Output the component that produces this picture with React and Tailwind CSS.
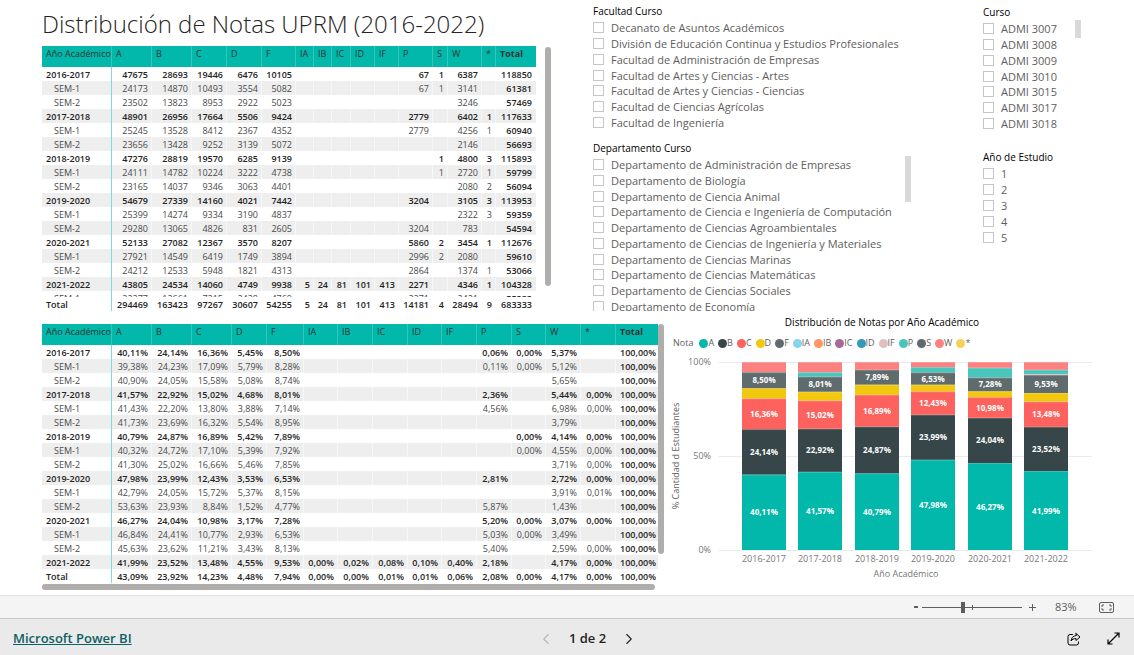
import { useState } from 'react';
import { ChevronLeft, ChevronRight } from 'lucide-react';

const GRADES = ['A', 'B', 'C', 'D', 'F', 'IA', 'IB', 'IC', 'ID', 'IF', 'P', 'S', 'W', '*'];

const COLORS = {
  A: '#01B8AA', B: '#374649', C: '#FD625E', D: '#F2C80F', F: '#5F6B6D',
  IA: '#8AD4EB', IB: '#FE9666', IC: '#A66999', ID: '#3599B8', IF: '#DFBFBF',
  P: '#4AC5BB', S: '#5F6B6D', W: '#FB8281', '*': '#F4D25A',
};

// label | A | B | C | D | F | IA | IB | IC | ID | IF | P | S | W | * | Total
const parse = (text) => text.trim().split('\n').map((line) => line.trim().split('|'));

const COUNT_ROWS = parse(`
2016-2017|47675|28693|19446|6476|10105||||||67|1|6387||118850
SEM-1|24173|14870|10493|3554|5082||||||67|1|3141||61381
SEM-2|23502|13823|8953|2922|5023||||||||3246||57469
2017-2018|48901|26956|17664|5506|9424||||||2779||6402|1|117633
SEM-1|25245|13528|8412|2367|4352||||||2779||4256|1|60940
SEM-2|23656|13428|9252|3139|5072||||||||2146||56693
2018-2019|47276|28819|19570|6285|9139|||||||1|4800|3|115893
SEM-1|24111|14782|10224|3222|4738|||||||1|2720|1|59799
SEM-2|23165|14037|9346|3063|4401||||||||2080|2|56094
2019-2020|54679|27339|14160|4021|7442||||||3204||3105|3|113953
SEM-1|25399|14274|9334|3190|4837||||||||2322|3|59359
SEM-2|29280|13065|4826|831|2605||||||3204||783||54594
2020-2021|52133|27082|12367|3570|8207||||||5860|2|3454|1|112676
SEM-1|27921|14549|6419|1749|3894||||||2996|2|2080||59610
SEM-2|24212|12533|5948|1821|4313||||||2864||1374|1|53066
2021-2022|43805|24534|14060|4749|9938|5|24|81|101|413|2271||4346|1|104328
SEM-1|22277|12661|7215|2428|4769||||||2271||2421||55233
`);

const COUNT_TOTAL = 'Total|294469|163423|97267|30607|54255|5|24|81|101|413|14181|4|28494|9|683333'.split('|');

const PERCENT_ROWS = parse(`
2016-2017|40,11%|24,14%|16,36%|5,45%|8,50%||||||0,06%|0,00%|5,37%||100,00%
SEM-1|39,38%|24,23%|17,09%|5,79%|8,28%||||||0,11%|0,00%|5,12%||100,00%
SEM-2|40,90%|24,05%|15,58%|5,08%|8,74%||||||||5,65%||100,00%
2017-2018|41,57%|22,92%|15,02%|4,68%|8,01%||||||2,36%||5,44%|0,00%|100,00%
SEM-1|41,43%|22,20%|13,80%|3,88%|7,14%||||||4,56%||6,98%|0,00%|100,00%
SEM-2|41,73%|23,69%|16,32%|5,54%|8,95%||||||||3,79%||100,00%
2018-2019|40,79%|24,87%|16,89%|5,42%|7,89%|||||||0,00%|4,14%|0,00%|100,00%
SEM-1|40,32%|24,72%|17,10%|5,39%|7,92%|||||||0,00%|4,55%|0,00%|100,00%
SEM-2|41,30%|25,02%|16,66%|5,46%|7,85%||||||||3,71%|0,00%|100,00%
2019-2020|47,98%|23,99%|12,43%|3,53%|6,53%||||||2,81%||2,72%|0,00%|100,00%
SEM-1|42,79%|24,05%|15,72%|5,37%|8,15%||||||||3,91%|0,01%|100,00%
SEM-2|53,63%|23,93%|8,84%|1,52%|4,77%||||||5,87%||1,43%||100,00%
2020-2021|46,27%|24,04%|10,98%|3,17%|7,28%||||||5,20%|0,00%|3,07%|0,00%|100,00%
SEM-1|46,84%|24,41%|10,77%|2,93%|6,53%||||||5,03%|0,00%|3,49%||100,00%
SEM-2|45,63%|23,62%|11,21%|3,43%|8,13%||||||5,40%||2,59%|0,00%|100,00%
2021-2022|41,99%|23,52%|13,48%|4,55%|9,53%|0,00%|0,02%|0,08%|0,10%|0,40%|2,18%||4,17%|0,00%|100,00%
`);

const PERCENT_TOTAL = 'Total|43,09%|23,92%|14,23%|4,48%|7,94%|0,00%|0,00%|0,01%|0,01%|0,06%|2,08%|0,00%|4,17%|0,00%|100,00%'.split('|');

const COUNT_WIDTHS = [70, 40, 40, 35, 35, 34, 18, 18, 19, 24, 24, 34, 15, 34, 14, 40];
const PERCENT_WIDTHS = [70, 40, 40, 40, 35, 37, 34, 35, 35, 34, 35, 35, 34, 35, 35, 42];

const FACULTIES = [
  'Decanato de Asuntos Académicos',
  'División de Educación Continua y Estudios Profesionales',
  'Facultad de Administración de Empresas',
  'Facultad de Artes y Ciencias - Artes',
  'Facultad de Artes y Ciencias - Ciencias',
  'Facultad de Ciencias Agrícolas',
  'Facultad de Ingeniería',
];

const DEPARTMENTS = [
  'Departamento de Administración de Empresas',
  'Departamento de Biología',
  'Departamento de Ciencia Animal',
  'Departamento de Ciencia e Ingeniería de Computación',
  'Departamento de Ciencias Agroambientales',
  'Departamento de Ciencias de Ingeniería y Materiales',
  'Departamento de Ciencias Marinas',
  'Departamento de Ciencias Matemáticas',
  'Departamento de Ciencias Sociales',
  'Departamento de Economía',
];

const COURSES = ['ADMI 3007', 'ADMI 3008', 'ADMI 3009', 'ADMI 3010', 'ADMI 3015', 'ADMI 3017', 'ADMI 3018'];
const STUDY_YEARS = ['1', '2', '3', '4', '5'];

function Matrix({ label, widths, rows, total, lastPad, clipLast }) {
  const tableWidth = widths.reduce((sum, w) => sum + w, 0);

  return (
    <table
      aria-label={label}
      className="table-fixed border-separate border-spacing-0 text-[9px] leading-4 text-[#333333]"
      style={{ width: tableWidth }}
    >
      <colgroup>
        {widths.map((w, i) => (
          <col key={i} style={{ width: w }} />
        ))}
      </colgroup>
      <thead>
        <tr className="bg-[#01b8aa]">
          {['Año Académico', ...GRADES, 'Total'].map((name, i) => (
            <th
              key={name}
              scope="col"
              className={`h-[21px] whitespace-nowrap border-r border-[#34c6bb] p-0 pl-1 text-left align-top last:border-r-0 ${
                i === 15 ? 'font-bold' : 'font-normal'
              }`}
            >
              {name}
            </th>
          ))}
        </tr>
      </thead>
      <tbody>
        {rows.map((row, r) => {
          const isYear = !row[0].startsWith('SEM');
          const clipped = clipLast && r === rows.length - 1;
          return (
            <tr key={r} className="even:bg-[#eeeeee]">
              {row.map((value, i) => {
                const weight = isYear || i === 15 ? 'font-semibold text-[#252423]' : 'font-normal text-[#4a4a4a]';
                const height = clipped ? 'h-1.5 overflow-hidden' : 'h-3.5';
                if (i === 0) {
                  return (
                    <th
                      key={i}
                      scope="row"
                      className={`border-r border-[#80dbd4] p-0 text-left ${isYear ? 'pl-1' : 'pl-3'} ${weight}`}
                    >
                      <div className={height}>{value}</div>
                    </th>
                  );
                }
                return (
                  <td
                    key={i}
                    className={`border-r border-white/50 p-0 text-right last:border-r-0 ${i === 15 ? lastPad : 'pr-[3px]'} ${weight}`}
                  >
                    <div className={height}>{value}</div>
                  </td>
                );
              })}
            </tr>
          );
        })}
      </tbody>
      <tfoot>
        <tr className="font-semibold text-[#252423]">
          {total.map((value, i) =>
            i === 0 ? (
              <th key={i} scope="row" className="border-r border-[#80dbd4] p-0 pl-1 text-left font-semibold">
                <div className="h-3.5">{value}</div>
              </th>
            ) : (
              <td key={i} className={`p-0 text-right ${i === 15 ? lastPad : 'pr-1'}`}>
                <div className="h-3.5">{value}</div>
              </td>
            )
          )}
        </tr>
      </tfoot>
    </table>
  );
}

function Slicer({ title, items, listHeight }) {
  return (
    <fieldset className="min-w-0">
      <legend className="text-[10px] leading-[14px] text-black">{title}</legend>
      <div className={`mt-0.5 flex flex-col ${listHeight}`}>
        {items.map((item) => (
          <label key={item} className="flex flex-1 items-center gap-[7px] whitespace-nowrap text-[11px] leading-[15px] text-[#605e5c]">
            <input
              type="checkbox"
              className="size-[11px] shrink-0 appearance-none border border-[#c8c6c4] bg-white checked:bg-[#605e5c]"
            />
            {item}
          </label>
        ))}
      </div>
    </fieldset>
  );
}

function Legend() {
  return (
    <div className="flex items-center gap-1 text-[9px] leading-3 text-[#605e5c]">
      <span className="mr-0.5">Nota</span>
      {GRADES.map((g) => (
        <span key={g} className="flex items-center">
          <span className="size-[9px] rounded-full" style={{ backgroundColor: COLORS[g] }} />
          {g}
        </span>
      ))}
    </div>
  );
}

const PLOT_TOP = 7;
const PLOT_HEIGHT = 188;
const BAR_WIDTH = 44;

function StackedChart() {
  const years = PERCENT_ROWS.filter((row) => !row[0].startsWith('SEM'));

  return (
    <svg
      viewBox="0 0 436 230"
      className="block w-full max-w-[436px] text-[9px]"
      role="img"
      aria-label="Distribución de Notas por Año Académico"
    >
      {[100, 50, 0].map((tick) => {
        const y = PLOT_TOP + PLOT_HEIGHT * (1 - tick / 100);
        return (
          <g key={tick}>
            <line x1="55" x2="428" y1={y + 0.5} y2={y + 0.5} stroke="#eaeaea" />
            <text x="47" y={y + 3} textAnchor="end" fill="#777777">{tick}%</text>
          </g>
        );
      })}
      {years.map((row, n) => {
        const x = 78 + Math.round(n * 56.4);
        const values = GRADES.map((_, i) => parseFloat((row[i + 1] || '0').replace(',', '.')));
        const sum = values.reduce((a, b) => a + b, 0);
        let base = 0;
        return (
          <g key={row[0]}>
            {GRADES.map((g, i) => {
              const height = (values[i] / sum) * PLOT_HEIGHT;
              const y = PLOT_TOP + PLOT_HEIGHT - base - height;
              base += height;
              if (height < 0.1) return null;
              return (
                <g key={g}>
                  <rect x={x} y={y} width={BAR_WIDTH} height={height} fill={COLORS[g]} />
                  {height > 1 && (
                    <path d={`M${x} ${y + 0.5}h${BAR_WIDTH}`} stroke="#ffffff" strokeOpacity="0.2" />
                  )}
                  {height > 11 && (
                    <text x={x + BAR_WIDTH / 2} y={y + height / 2 + 3} textAnchor="middle" fill="#ffffff" className="text-[8px] font-bold">
                      {row[i + 1]}
                    </text>
                  )}
                </g>
              );
            })}
            <text x={x + BAR_WIDTH / 2} y="207" textAnchor="middle" fill="#777777">{row[0]}</text>
          </g>
        );
      })}
      <text x="242" y="222" textAnchor="middle" fill="#777777">Año Académico</text>
      <text transform="translate(15 101) rotate(-90)" textAnchor="middle" fill="#605e5c">% Cantidad d Estudiantes</text>
    </svg>
  );
}

function ZoomBar() {
  const [zoom, setZoom] = useState(83);

  return (
    <div className="flex h-[23px] items-center justify-end border-t border-[#e1e1e1] bg-[#f4f4f4] pr-5 text-[#605e5c]">
      <button type="button" aria-label="Alejar" onClick={() => setZoom(zoom - 10)} className="flex w-3 justify-center">
        <svg width="6" height="12" viewBox="0 0 6 12"><path d="M1 6h4" stroke="currentColor" strokeWidth="2" /></svg>
      </button>
      <div className="relative flex h-3 items-center">
        <input
          type="range"
          aria-label="Zoom"
          min="10"
          max="190"
          value={zoom}
          onChange={(e) => setZoom(Number(e.target.value))}
          className="h-px w-[100px] appearance-none bg-[#605e5c] [&::-webkit-slider-thumb]:h-[11px] [&::-webkit-slider-thumb]:w-1 [&::-webkit-slider-thumb]:appearance-none [&::-webkit-slider-thumb]:bg-[#605e5c]"
        />
        <span className="pointer-events-none absolute left-1/2 top-1 h-[5px] w-px bg-[#605e5c]" />
      </div>
      <button type="button" aria-label="Acercar" onClick={() => setZoom(zoom + 10)} className="ml-1.5 flex">
        <svg width="9" height="9" viewBox="0 0 9 9"><path d="M1 4.5h7M4.5 1v7" stroke="currentColor" /></svg>
      </button>
      <span className="ml-[18px] w-6 text-[11px] leading-4">{zoom}%</span>
      <button type="button" aria-label="Ajustar a la página" className="ml-5 flex">
        <svg width="15" height="11" viewBox="0 0 15 11" fill="none" stroke="currentColor">
          <rect x=".5" y=".5" width="14" height="10" rx="1.5" />
          <path d="M5 3H3v2M10 3h2v2M3 6v2h2M12 6v2h-2" />
        </svg>
      </button>
    </div>
  );
}

function Footer() {
  const [page, setPage] = useState(1);

  return (
    <footer className="grid h-[37px] grid-cols-3 items-center border-t border-[#c8c8c8] bg-[#eaeaea] pl-[13px] pr-3.5 pt-[3px]">
      <a href="https://powerbi.microsoft.com" className="text-[13px] font-semibold text-[#0d6063] underline">
        Microsoft Power BI
      </a>
      <div className="flex items-center justify-center gap-3.5 pl-[42px] text-[13px] font-semibold text-[#252423]">
        <button type="button" aria-label="Página anterior" onClick={() => setPage(1)} className="text-[#b9b8b6]">
          <ChevronLeft size={18} strokeWidth={1.5} />
        </button>
        <span>{page} de 2</span>
        <button type="button" aria-label="Página siguiente" onClick={() => setPage(2)}>
          <ChevronRight size={18} strokeWidth={1.5} />
        </button>
      </div>
      <div className="flex items-center justify-end gap-[26px] text-black">
        <button type="button" aria-label="Compartir">
          <svg width="14" height="14" viewBox="0 0 14 14" fill="none" stroke="currentColor" strokeLinejoin="round" strokeLinecap="round">
            <path d="M5.5 2.5H3a2 2 0 0 0-2 2V11a2 2 0 0 0 2 2h6.500a2 2 0 0 0 2-2v-1" />
            <path d="M9 1.500 13 5 9 8.500V6.600C6.600 6.500 5.200 7.300 4 9c.3-3 2-5.200 5-5.500z" />
          </svg>
        </button>
        <button type="button" aria-label="Pantalla completa">
          <svg width="13" height="13" viewBox="0 0 13 13" fill="none" stroke="currentColor" strokeWidth="1.200">
            <path d="M1 12 12 1M7.500 1H12v4.500M1 7.500V12h4.500" />
          </svg>
        </button>
      </div>
    </footer>
  );
}

export default function App() {
  return (
    <div className="flex min-h-screen flex-col bg-white font-['Open_Sans',sans-serif]">
      <main className="flex-1 pl-[42px]">
        <div className="flex">
          <section className="w-[551px] shrink-0">
            <h1 className="flex h-[46px] items-center whitespace-nowrap pt-0.5 text-2xl font-light text-[#252423]">
              Distribución de Notas UPRM (2016-2022)
            </h1>
            <div className="flex gap-[9px]">
              <Matrix
                label="Cantidad de notas por año académico"
                widths={COUNT_WIDTHS}
                rows={COUNT_ROWS}
                total={COUNT_TOTAL}
                lastPad="pr-1"
                clipLast
              />
              <div className="mt-px h-[239px] w-1.5 rounded-full bg-[#b0aeac]" />
            </div>
          </section>

          <div className="flex h-[311px] w-[390px] shrink-0 flex-col gap-[11px] overflow-hidden pt-1">
            <Slicer title="Facultad Curso" items={FACULTIES} listHeight="h-[110px]" />
            <div className="flex justify-between">
              <Slicer title="Departamento Curso" items={DEPARTMENTS} listHeight="h-[157px]" />
              <div className="mr-[72px] mt-[15px] h-[46px] w-1.5 bg-[#d9d9d9]" />
            </div>
          </div>

          <div className="flex flex-1 flex-col gap-[19px] pt-[5px]">
            <div className="flex">
              <Slicer title="Curso" items={COURSES} listHeight="h-[110px]" />
              <div className="ml-[18px] mt-[15px] h-[18px] w-1.5 bg-[#d9d9d9]" />
            </div>
            <Slicer title="Año de Estudio" items={STUDY_YEARS} listHeight="h-[79px]" />
          </div>
        </div>

        <div className="mt-[13px] flex">
          <section className="w-[622px] shrink-0">
            <div className="flex">
              <Matrix
                label="Porcentaje de notas por año académico"
                widths={PERCENT_WIDTHS}
                rows={PERCENT_ROWS}
                total={PERCENT_TOTAL}
                lastPad="pr-0.5"
              />
              <div className="h-[230px] w-1.5 rounded-full bg-[#b0aeac]" />
            </div>
            <div className="mt-px h-1.5 w-[613px] rounded-full bg-[#b0aeac]" />
          </section>

          <section className="-mt-[9px] flex-1 pr-[34px]">
            <h2 className="text-center text-[10px] leading-[14px] text-black">Distribución de Notas por Año Académico</h2>
            <div className="mb-1.5 mt-2 pl-[9px]">
              <Legend />
            </div>
            <StackedChart />
          </section>
        </div>
      </main>
      <ZoomBar />
      <Footer />
    </div>
  );
}
